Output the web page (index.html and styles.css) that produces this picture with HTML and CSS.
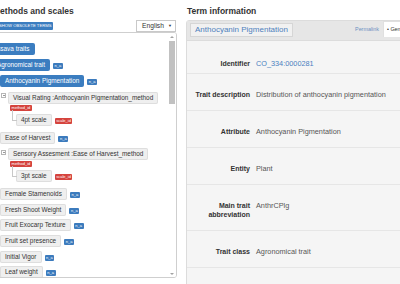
FILE: index.html
```html
<!DOCTYPE html>
<html>
<head>
<meta charset="utf-8">
<title>Methods and scales</title>
<link rel="stylesheet" href="styles.css">
</head>
<body>
<div class="page">
  <section class="left">
    <h2 class="heading">Methods and scales</h2>
    <div class="toolbar">
      <button class="btn-obsolete">SHOW OBSOLETE TERMS</button>
      <div class="select"><span>English</span><span class="caret">&#9660;</span></div>
    </div>
    <div class="treebox">
      <div class="tree">
        <ul>
          <li><span class="node primary">Cassava traits</span>
            <ul class="sub">
              <li><span class="node primary">Agronomical trait</span><span class="badge blue">n_a</span>
                <ul class="sub traits">
                  <li><span class="node primary">Anthocyanin Pigmentation</span><span class="badge blue">n_a</span>
                    <ul class="methods">
                      <li class="method"><span class="toggle"></span>
                        <div class="mbody">
                          <span class="node">Visual Rating :Anthocyanin Pigmentation_method</span>
                          <span class="badge red under">method_id</span>
                          <ul class="scales">
                            <li><span class="node">4pt scale</span><span class="badge red">scale_id</span></li>
                          </ul>
                        </div>
                      </li>
                    </ul>
                  </li>
                  <li><span class="node">Ease of Harvest</span><span class="badge blue">n_a</span>
                    <ul class="methods">
                      <li class="method"><span class="toggle"></span>
                        <div class="mbody">
                          <span class="node">Sensory Assesment :Ease of Harvest_method</span>
                          <span class="badge red under">method_id</span>
                          <ul class="scales">
                            <li><span class="node">3pt scale</span><span class="badge red">scale_id</span></li>
                          </ul>
                        </div>
                      </li>
                    </ul>
                  </li>
                  <li><span class="node">Female Stamenoids</span><span class="badge blue">n_a</span></li>
                  <li><span class="node">Fresh Shoot Weight</span><span class="badge blue">n_a</span></li>
                  <li><span class="node">Fruit Exocarp Texture</span><span class="badge blue">n_a</span></li>
                  <li><span class="node">Fruit set presence</span><span class="badge blue">n_a</span></li>
                  <li><span class="node">Initial Vigor</span><span class="badge blue">n_a</span></li>
                  <li><span class="node">Leaf weight</span><span class="badge blue">n_a</span></li>
                </ul>
              </li>
            </ul>
          </li>
        </ul>
      </div>
      <div class="scrollbar">
        <span class="arrow up"></span>
        <span class="thumb"></span>
        <span class="track"></span>
        <span class="arrow down"></span>
      </div>
    </div>
  </section>

  <section class="right">
    <h2 class="heading">Term information</h2>
    <div class="panel">
      <div class="panel-head">
        <span class="title-box">Anthocyanin Pigmentation</span>
        <span class="permalink">Permalink</span>
        <span class="tab">&bull; General</span>
      </div>
      <div class="panel-body">
        <div class="row first"><span class="label">Identifier</span><span class="value link">CO_334:0000281</span></div>
        <div class="row"><span class="label">Trait description</span><span class="value">Distribution of anthocyanin pigmentation</span></div>
        <div class="row"><span class="label">Attribute</span><span class="value">Anthocyanin Pigmentation</span></div>
        <div class="row"><span class="label">Entity</span><span class="value">Plant</span></div>
        <div class="row"><span class="label">Main trait abbreviation</span><span class="value">AnthrCPlg</span></div>
        <div class="row"><span class="label">Trait class</span><span class="value">Agronomical trait</span></div>
      </div>
    </div>
  </section>
</div>
</body>
</html>
```

FILE: styles.css
```css
* { box-sizing: border-box; }
html, body {
  margin: 0;
  padding: 0;
  height: 284px;
  overflow: hidden;
  background: #fff;
}
body {
  font-family: "Liberation Sans", Arial, sans-serif;
  color: #333;
}
.page {
  display: flex;
  align-items: flex-start;
  width: 700px;
}

/* headings */
.heading {
  margin: 0;
  padding-top: 5.5px;
  font-size: 8.5px;
  line-height: 10px;
  font-weight: bold;
  color: #333;
}

/* left column */
.left {
  flex: 0 0 197px;
  margin-left: -20px;
}
.left .heading { padding-left: 13px; }
.toolbar {
  display: flex;
  justify-content: space-between;
  align-items: center;
  height: 12px;
  margin-top: 4px;
  padding-left: 14px;
  padding-right: 1px;
}
.btn-obsolete {
  height: 8px;
  margin: 0;
  padding: 0 1px 0 5px;
  border: 0;
  border-radius: 1px;
  background: #3b7dc0;
  color: #fff;
  font-family: "Liberation Sans", Arial, sans-serif;
  font-size: 4.2px;
  line-height: 8px;
  white-space: nowrap;
}
.select {
  display: flex;
  align-items: center;
  justify-content: space-between;
  width: 40px;
  height: 12px;
  padding: 0 3px 0 5px;
  border: 1px solid #c9c9c9;
  background: #fff;
  font-size: 6.7px;
  color: #333;
}
.caret { font-size: 4px; }

.treebox {
  display: flex;
  height: 246px;
  margin-top: 0.5px;
  border: 1px solid #cfcfcf;
  border-radius: 3px;
  overflow: hidden;
}
.tree {
  flex: 1;
  padding: 10px 0 0 3px;
  overflow: hidden;
}
.tree ul {
  list-style: none;
  margin: 0;
  padding: 0;
}
.tree li {
  display: flex;
  flex-wrap: wrap;
  align-items: center;
  column-gap: 3px;
}
.tree li > ul { flex: 0 0 100%; }
.tree .sub {
  display: flex;
  flex-direction: column;
  row-gap: 3.6px;
  margin-top: 4px;
  padding-left: 8px;
}
.tree .methods {
  margin: 4.5px 0 2.5px;
  padding-left: 1px;
}
.tree li.method {
  display: grid;
  grid-template-columns: 5px auto;
  column-gap: 2px;
  align-items: start;
}
.mbody {
  display: flex;
  flex-direction: column;
  align-items: flex-start;
}
.tree .scales {
  width: 100%;
  margin-top: 3px;
  padding-left: 8px;
}
.scales li { position: relative; }
.scales li::before {
  content: "";
  position: absolute;
  left: -4px;
  top: -4px;
  width: 4px;
  height: 10px;
  border-left: 1px solid #c8c8c8;
  border-bottom: 1px solid #c8c8c8;
}

.node {
  display: inline-block;
  height: 12px;
  padding: 0 5px;
  border-radius: 2px;
  background: #efefef;
  box-shadow: inset 0 0 0 1px #dedede;
  color: #333;
  font-size: 6.4px;
  line-height: 12px;
  white-space: nowrap;
}
.node.primary {
  background: #3b7dc0;
  box-shadow: none;
  color: #fff;
}
.badge {
  display: inline-block;
  height: 6px;
  margin-top: 2px;
  padding: 0 1.6px;
  border-radius: 1px;
  color: #fff;
  font-size: 4px;
  line-height: 6px;
  white-space: nowrap;
}
.badge.blue { background: #3c7bbd; }
.badge.red { background: #d5433d; }
.badge.under { margin: 1px 0 0 2px; }

.toggle {
  position: relative;
  width: 5px;
  height: 5px;
  margin-top: 1.5px;
  border: 1px solid #b5b5b5;
  background: #fff;
}
.toggle::after {
  content: "";
  position: absolute;
  left: 0.5px;
  right: 0.5px;
  top: 1px;
  height: 1px;
  background: #999;
}

.scrollbar {
  display: flex;
  flex-direction: column;
  align-items: center;
  width: 8px;
  padding: 1px 0 2px;
  background: #fff;
}
.arrow {
  width: 0;
  height: 0;
  border-left: 2px solid transparent;
  border-right: 2px solid transparent;
}
.arrow.up { border-bottom: 2px solid #a3a3a3; margin: 2px 0 3px; }
.arrow.down { border-top: 2px solid #a3a3a3; margin-top: 2px; }
.thumb {
  width: 6px;
  height: 63px;
  background: #c1c1c1;
}
.track { flex: 1; }

/* right column */
.right {
  flex: 0 0 260px;
  margin-left: 9px;
}
.right .heading { padding-left: 1px; }
.panel {
  height: 300px;
  margin-top: 4.5px;
  border: 1px solid #dcdcdc;
  border-radius: 3px;
  background: #f5f5f5;
}
.panel-head {
  display: flex;
  align-items: flex-start;
  height: 20px;
  padding-left: 3px;
  padding-right: 4px;
  border-bottom: 1px solid #dcdcdc;
  background: #e6e6e6;
}
.title-box {
  height: 14px;
  margin-top: 2px;
  padding: 0 4px;
  border: 1px solid #d6d6d6;
  background: #f1f1f1;
  color: #4f81bd;
  font-size: 8px;
  line-height: 12px;
  white-space: nowrap;
}
.permalink {
  margin-left: auto;
  margin-right: 4px;
  margin-top: 5px;
  color: #6d90c2;
  font-size: 5.4px;
  line-height: 6px;
}
.tab {
  width: 58px;
  height: 16px;
  padding-left: 3px;
  background: #fff;
  border: 1px solid #e0e0e0;
  border-bottom: 0;
  color: #333;
  font-size: 5.4px;
  line-height: 15px;
  white-space: nowrap;
}
.row {
  display: grid;
  grid-template-columns: 58px 1fr;
  column-gap: 6px;
  padding: 16px 0 11px 5px;
  border-bottom: 1px solid #e6e6e6;
  line-height: 9px;
}
.row.first { padding-top: 18px; padding-bottom: 5px; }
.label {
  text-align: right;
  font-weight: bold;
  font-size: 7px;
  color: #333;
}
.value {
  font-size: 7.3px;
  color: #555;
}
.value.link { color: #4a7fc0; }
```
